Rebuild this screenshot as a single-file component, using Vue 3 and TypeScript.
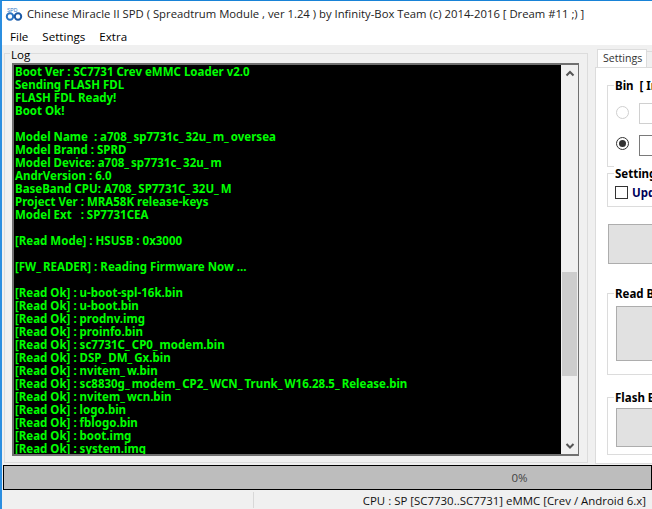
<script setup lang="ts">
const lines: string[] = [
  'Boot Ver : SC7731 Crev eMMC Loader v2.0',
  'Sending FLASH FDL',
  'FLASH FDL Ready!',
  'Boot Ok!',
  '',
  'Model Name  : a708_sp7731c_32u_m_oversea',
  'Model Brand : SPRD',
  'Model Device: a708_sp7731c_32u_m',
  'AndrVersion : 6.0',
  'BaseBand CPU: A708_SP7731C_32U_M',
  'Project Ver : MRA58K release-keys',
  'Model Ext   : SP7731CEA',
  '',
  '[Read Mode] : HSUSB : 0x3000',
  '',
  '[FW_READER] : Reading Firmware Now ...',
  '',
  '[Read Ok] : u-boot-spl-16k.bin',
  '[Read Ok] : u-boot.bin',
  '[Read Ok] : prodnv.img',
  '[Read Ok] : proinfo.bin',
  '[Read Ok] : sc7731C_CP0_modem.bin',
  '[Read Ok] : DSP_DM_Gx.bin',
  '[Read Ok] : nvitem_w.bin',
  '[Read Ok] : sc8830g_modem_CP2_WCN_Trunk_W16.28.5_Release.bin',
  '[Read Ok] : nvitem_wcn.bin',
  '[Read Ok] : logo.bin',
  '[Read Ok] : fblogo.bin',
  '[Read Ok] : boot.img',
  '[Read Ok] : system.img',
]
const menus: string[] = ['File', 'Settings', 'Extra']
</script>

<template>
  <div class="window">
    <header class="titlebar">
      <svg class="logo" width="18" height="16" viewBox="0 0 18 16">
        <text x="2" y="5.500" class="logo-text">SPD</text>
        <circle cx="5" cy="10.500" r="3.200" fill="none" stroke="#2a74c4" stroke-width="2" />
        <circle cx="13" cy="10.500" r="3.200" fill="none" stroke="#1d5aa6" stroke-width="2" />
      </svg>
      <span class="title">Chinese Miracle II SPD ( Spreadtrum Module , ver 1.24 ) by Infinity-Box Team (c) 2014-2016 [ Dream #11 ;) ]</span>
    </header>
    <nav class="menubar">
      <span v-for="m in menus" :key="m" class="menu">{{ m }}</span>
    </nav>
    <main class="body">
      <section class="log-group">
        <span class="log-legend">Log</span>
        <div class="log-frame">
          <div class="log-text">
            <div v-for="(l, i) in lines" :key="i" class="line"><template v-if="l"><template v-for="(part, j) in l.split('_')" :key="j"><span v-if="j > 0" class="us">_</span>{{ part }}</template></template><template v-else>&nbsp;</template></div>
          </div>
          <div class="scrollbar">
            <svg class="arrow" width="16" height="16" viewBox="0 0 16 16"><path d="M4.500 10.500 8 7 11.500 10.500" fill="none" stroke="#555" stroke-width="2" /></svg>
            <div class="track"><div class="thumb"></div></div>
            <svg class="arrow" width="16" height="16" viewBox="0 0 16 16"><path d="M4.500 6 8 9.500 11.500 6" fill="none" stroke="#555" stroke-width="2" /></svg>
          </div>
        </div>
      </section>
      <aside class="side">
        <div class="tabs">
          <span class="tab">Settings</span>
          <span class="tab tab-other"></span>
        </div>
        <div class="pane">
          <div class="group group-bin">
            <span class="legend">Bin&nbsp; [ Image File ]</span>
            <div class="bin-row">
              <span class="radio radio-off"></span>
              <span class="field field-off"></span>
            </div>
            <div class="bin-row">
              <span class="radio radio-on"></span>
              <span class="field"></span>
            </div>
          </div>
          <div class="group group-set">
            <span class="legend">Settings</span>
            <div class="check-row">
              <span class="check"></span>
              <span class="check-label">Update</span>
            </div>
          </div>
          <div class="big-btn"></div>
          <div class="group group-read">
            <span class="legend">Read Bin</span>
            <div class="inner-btn inner-read"></div>
          </div>
          <div class="group group-flash">
            <span class="legend">Flash Bin</span>
            <div class="inner-btn inner-flash"></div>
          </div>
        </div>
      </aside>
    </main>
    <div class="progress"><span class="pct">0%</span></div>
    <footer class="status">
      <span class="status-left"></span>
      <span class="status-right">CPU : SP [SC7730..SC7731] eMMC [Crev / Android 6.x]</span>
    </footer>
  </div>
</template>

<style scoped>
.window {
  width: 652px;
  height: 509px;
  overflow: hidden;
  box-sizing: border-box;
  border-top: 1px solid #1883d7;
  border-left: 2px solid #2b8ee0;
  background: #f0f0f0;
  font-family: "Open Sans", "Noto Sans", sans-serif;
  color: #000;
  display: flex;
  flex-direction: column;
}
.titlebar {
  height: 25px;
  background: #fff;
  display: flex;
  align-items: center;
  flex-shrink: 0;
  padding-left: 3px;
  gap: 4px;
}
.logo { flex-shrink: 0; }
.logo-text { font-size: 5px; fill: #2b78c6; font-family: "Liberation Sans", sans-serif; }
.title {
  font-size: 11.300px;
  color: #222;
  white-space: nowrap;
}
.menubar {
  height: 19px;
  background: #fff;
  display: flex;
  align-items: center;
  padding: 1px 0 0 8px;
  box-sizing: border-box;
  gap: 14px;
  flex-shrink: 0;
  font-size: 11.600px;
}
.body {
  height: 418px;
  display: flex;
  flex-shrink: 0;
  padding: 8px 0 0 2px;
  box-sizing: border-box;
  gap: 7px;
}
.log-group {
  position: relative;
  width: 584px;
  height: 410px;
  box-sizing: border-box;
  flex-shrink: 0;
  border: 1px solid #dcdcdc;
  padding: 9px 8px 0 7px;
}
.log-legend {
  position: absolute;
  left: 5px;
  top: -6px;
  background: #f0f0f0;
  font-size: 11.600px;
  line-height: 13px;
  padding: 0 1px;
}
.log-frame {
  height: 389px;
  display: flex;
  border: 2px solid #707070;
  border-right-width: 1px;
  background: #000;
}
.log-text {
  flex: 1;
  min-width: 0;
  overflow: hidden;
  padding: 0 0 0 1px;
  font-family: "Noto Sans", sans-serif;
  font-weight: 700;
  font-size: 11.500px;
  line-height: 13px;
  color: #00ff00;
  white-space: pre;
}
.line { height: 13px; }
.us { letter-spacing: 2px; }
.scrollbar {
  width: 17px;
  background: #f0f0f0;
  display: flex;
  flex-direction: column;
  flex-shrink: 0;
}
.arrow { display: block; flex-shrink: 0; margin: 0 auto; }
.track { flex: 1; display: flex; flex-direction: column; justify-content: flex-end; padding-bottom: 62px; }
.thumb { height: 104px; margin: 0 1px; background: #cdcdcd; }
.side {
  width: 120px;
  flex-shrink: 0;
  display: flex;
  flex-direction: column;
  margin-top: -4px;
}
.tabs {
  display: flex;
  height: 18px;
  padding-left: 2px;
}
.tab {
  box-sizing: border-box;
  width: 50px;
  height: 18px;
  border: 1px solid #dcdcdc;
  border-bottom: 0;
  background: #fff;
  font-size: 10.600px;
  line-height: 17px;
  padding-left: 5px;
  color: #333;
  flex-shrink: 0;
}
.tab-other { background: #f0f0f0; width: 20px; margin-top: 2px; height: 16px; border-left: 0; }
.pane {
  width: 120px;
  height: 397px;
  background: #fff;
  border: 1px solid #dcdcdc;
  box-sizing: border-box;
  padding: 17px 0 0 11px;
  flex-shrink: 0;
}
.group {
  position: relative;
  box-sizing: border-box;
  width: 110px;
  border: 1px solid #dcdcdc;
}
.legend {
  position: absolute;
  left: 6px;
  top: -8px;
  padding: 0 1px;
  background: #fff;
  font-family: "Noto Sans", sans-serif;
  font-weight: 700;
  font-size: 11.500px;
  line-height: 15px;
  white-space: nowrap;
  color: #000;
}
.group-bin { height: 82px; padding: 17px 0 0 8px; }
.bin-row { display: flex; align-items: flex-start; gap: 10px; height: 21px; margin-bottom: 11px; }
.radio {
  box-sizing: border-box;
  width: 13px;
  height: 13px;
  border-radius: 50%;
  border: 1px solid #cfcfcf;
  background: #fff;
  flex-shrink: 0;
  position: relative;
  margin-top: 3px;
}
.radio-on { border-color: #333; margin-top: 2px; }
.radio-on::after {
  content: "";
  position: absolute;
  left: 2px;
  top: 2px;
  width: 7px;
  height: 7px;
  border-radius: 50%;
  background: #333;
}
.field {
  box-sizing: border-box;
  width: 70px;
  height: 21px;
  border: 1px solid #7a7a7a;
  background: #fff;
  flex-shrink: 0;
}
.field-off { border-color: #d0d0d0; }
.group-set { height: 34px; margin-top: 6px; padding: 12px 0 0 7px; }
.check-row { display: flex; align-items: center; gap: 4px; height: 13px; }
.check {
  box-sizing: border-box;
  width: 13px;
  height: 13px;
  border: 1px solid #333;
  background: #fff;
  flex-shrink: 0;
}
.check-label {
  font-family: "Noto Sans", sans-serif;
  font-weight: 700;
  font-size: 11.500px;
  color: #00005a;
}
.big-btn {
  box-sizing: border-box;
  width: 90px;
  height: 40px;
  margin: 17px 0 0 1px;
  border: 1px solid #adadad;
  background: #e1e1e1;
}
.group-read { height: 82px; margin-top: 29px; padding: 12px 0 0 8px; }
.group-flash { height: 58px; margin-top: 22px; padding: 10px 0 0 8px; }
.inner-btn {
  box-sizing: border-box;
  width: 90px;
  border: 1px solid #adadad;
  background: #e1e1e1;
}
.inner-read { height: 55px; }
.inner-flash { height: 39px; }
.progress {
  height: 25px;
  flex-shrink: 0;
  margin-top: 2px;
  margin-left: 1px;
  background: #bdbdbd;
  border: 1px solid #000;
  box-sizing: border-box;
  display: flex;
  align-items: center;
  justify-content: center;
  padding-left: 384px;
  font-size: 11.500px;
  color: #444;
}
.status {
  flex: 1;
  background: #f0f0f0;
  display: flex;
  align-items: center;
  padding-top: 1px;
}
.status-left {
  width: 251px;
  height: 16px;
  border-right: 1px solid #d8d8d8;
  flex-shrink: 0;
  box-sizing: content-box;
}
.status-right {
  flex: 1;
  text-align: right;
  padding-right: 6px;
  font-size: 11.450px;
  color: #111;
  white-space: nowrap;
}
</style>
